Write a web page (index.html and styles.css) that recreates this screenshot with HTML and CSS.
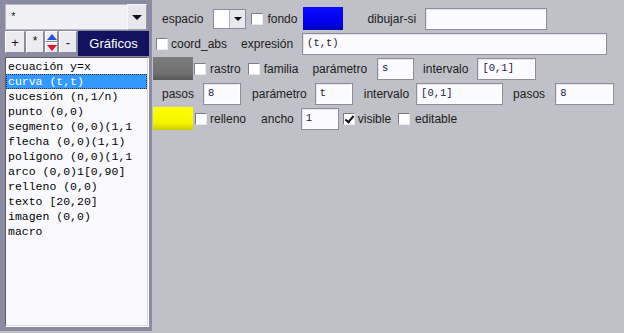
FILE: index.html
```html
<!DOCTYPE html>
<html lang="es">
<head>
    <meta charset="UTF-8">
    <title>Gráficos</title>
    <link rel="stylesheet" href="styles.css">
</head>
<body>
<div class="app">

    <!-- Left: element list -->
    <div class="side">
        <div class="combo">
            <span class="combo-text">*</span>
            <span class="combo-arrow"><span class="tri-down"></span></span>
        </div>
        <div class="tools">
            <span class="tbtn w-plus">+</span>
            <span class="tbtn w-star">*</span>
            <span class="spin">
                <span class="spin-up"><span class="tri-up"></span></span>
                <span class="spin-down"><span class="tri-red"></span></span>
            </span>
            <span class="tbtn w-minus">-</span>
            <span class="tab">Gráficos</span>
        </div>
        <ul class="list">
            <li>ecuación y=x</li>
            <li class="selected">curva (t,t)</li>
            <li>sucesión (n,1/n)</li>
            <li>punto (0,0)</li>
            <li>segmento (0,0)(1,1</li>
            <li>flecha (0,0)(1,1)</li>
            <li>polígono (0,0)(1,1</li>
            <li>arco (0,0)1[0,90]</li>
            <li>relleno (0,0)</li>
            <li>texto [20,20]</li>
            <li>imagen (0,0)</li>
            <li>macro</li>
        </ul>
    </div>

    <!-- Right: properties of the selected element -->
    <div class="props">
        <div class="row">
            <span class="ml-10">espacio</span>
            <span class="select ml-10"><span class="select-arrow"><span class="tri-small"></span></span></span>
            <span class="box ml-5"></span>
            <span class="ml-4">fondo</span>
            <span class="swatch swatch-blue ml-6"></span>
            <span class="ml-24">dibujar-si</span>
            <span class="field w-122 ml-9"></span>
        </div>
        <div class="row">
            <span class="box ml-4"></span>
            <span class="ml-3">coord_abs</span>
            <span class="ml-14">expresión</span>
            <span class="field w-305 ml-9">(t,t)</span>
        </div>
        <div class="row">
            <span class="swatch swatch-gray ml-1"></span>
            <span class="box ml-1"></span>
            <span class="ml-4">rastro</span>
            <span class="box ml-7"></span>
            <span class="ml-4">familia</span>
            <span class="ml-14">parámetro</span>
            <span class="field w-37 ml-10">s</span>
            <span class="ml-9">intervalo</span>
            <span class="field w-59 ml-9">[0,1]</span>
        </div>
        <div class="row">
            <span class="ml-10">pasos</span>
            <span class="field w-38 ml-9">8</span>
            <span class="ml-11">parámetro</span>
            <span class="field w-38 ml-8">t</span>
            <span class="ml-11">intervalo</span>
            <span class="field w-87 ml-7">[0,1]</span>
            <span class="ml-10">pasos</span>
            <span class="field w-59 ml-10">8</span>
        </div>
        <div class="row">
            <span class="swatch swatch-yellow ml-1"></span>
            <span class="box ml-2"></span>
            <span class="ml-3">relleno</span>
            <span class="ml-15">ancho</span>
            <span class="field w-38 ml-7">1</span>
            <span class="box checked ml-4"></span>
            <span class="ml-3">visible</span>
            <span class="box ml-7"></span>
            <span class="ml-5">editable</span>
        </div>
    </div>

</div>
</body>
</html>
```

FILE: styles.css
```css
body {
    margin: 0;
    font-family: "Liberation Sans", Arial, sans-serif;
    font-size: 12px;
    color: #1c1c1c;
    background-color: #c0c0c8;
    overflow: hidden;
}
.app {
    display: flex;
    height: 333px;
}

/* left side */
.side {
    width: 152px;
    height: 331px;
    flex-shrink: 0;
    background-color: #8a8aa2;
    padding: 4px 0 0 5px;
    box-sizing: border-box;
}
.combo {
    display: flex;
    width: 142px;
    height: 26px;
}
.combo-text {
    flex: 1;
    background-color: #f0f0f5;
    border: 1px solid #b8b8c4;
    border-right: none;
    font-family: "Liberation Mono", monospace;
    font-size: 11px;
    padding: 6px 0 0 4px;
    box-sizing: border-box;
}
.combo-arrow {
    width: 20px;
    background-color: #e6e6ec;
    border: 1px solid;
    border-color: #f8f8fc #9a9aa8 #9a9aa8 #f8f8fc;
    box-sizing: border-box;
    display: flex;
    justify-content: center;
    align-items: center;
}
.tri-down {
    width: 0;
    height: 0;
    border-left: 5px solid transparent;
    border-right: 5px solid transparent;
    border-top: 5px solid #111;
    margin-top: 1px;
}
.tools {
    display: flex;
    align-items: flex-start;
    margin-top: 1px;
    height: 25px;
}
.tbtn {
    height: 22px;
    box-sizing: border-box;
    background-color: #ebebf0;
    border: 1px solid;
    border-color: #ffffff #8a8a98 #8a8a98 #ffffff;
    display: flex;
    justify-content: center;
    align-items: center;
    font-size: 13px;
    color: #111;
    margin-right: 1px;
}
.w-plus { width: 20px; }
.w-star { width: 18px; font-family: "Liberation Mono", monospace; font-size: 12px; }
.w-minus { width: 18px; }
.spin {
    width: 13px;
    height: 22px;
    display: flex;
    flex-direction: column;
    margin-right: 1px;
}
.spin-up, .spin-down {
    flex: 1;
    background-color: #ebebf0;
    border: 1px solid;
    border-color: #ffffff #8a8a98 #8a8a98 #ffffff;
    display: flex;
    justify-content: center;
    align-items: center;
}
.tri-up {
    width: 0;
    height: 0;
    border-left: 5px solid transparent;
    border-right: 5px solid transparent;
    border-bottom: 6px solid #2a50d8;
}
.tri-red {
    width: 0;
    height: 0;
    border-left: 5px solid transparent;
    border-right: 5px solid transparent;
    border-top: 6px solid #e01428;
}
.tab {
    width: 71px;
    height: 25px;
    background-color: #12125e;
    color: #ffffff;
    font-size: 13px;
    display: flex;
    justify-content: center;
    align-items: center;
}
.list {
    list-style: none;
    margin: 1px 0 0 0;
    padding: 1px 0 0 0;
    width: 143px;
    height: 269px;
    box-sizing: border-box;
    background-color: #fafafe;
    border: 1px solid;
    border-color: #5c5c68 #d8d8e0 #d8d8e0 #5c5c68;
    box-shadow: 1px 1px 0 #ffffff;
    overflow: hidden;
    font-family: "Liberation Mono", monospace;
    font-size: 11.5px;
    color: #000;
}
.list li {
    height: 15px;
    line-height: 15px;
    padding-left: 2px;
    white-space: nowrap;
    overflow: hidden;
    box-sizing: border-box;
}
.list li.selected {
    background-color: #3399ff;
    color: #ffffff;
    outline: 1px dotted #403020;
    outline-offset: -1px;
}

/* right side */
.props {
    flex: 1;
    padding-top: 6px;
}
.row {
    display: flex;
    align-items: center;
    height: 25px;
    white-space: nowrap;
}
.field {
    height: 22px;
    box-sizing: border-box;
    background-color: #fbfbff;
    border: 1px solid #8c8c9a;
    box-shadow: inset -1px -1px 0 #ffffff, inset 1px 1px 0 #e4e4ec;
    font-family: "Liberation Mono", monospace;
    font-size: 10.5px;
    color: #202040;
    padding: 3px 0 0 4px;
}
.w-37 { width: 37px; }
.w-38 { width: 38px; }
.w-59 { width: 59px; }
.w-87 { width: 87px; }
.w-122 { width: 122px; }
.w-305 { width: 305px; }
.select {
    width: 33px;
    height: 20px;
    box-sizing: border-box;
    background-color: #ffffff;
    border: 1px solid #8c8c9a;
    display: flex;
    justify-content: flex-end;
}
.select-arrow {
    width: 15px;
    background-color: #e8e8ee;
    border-left: 1px solid #b0b0bc;
    display: flex;
    justify-content: center;
    align-items: center;
}
.tri-small {
    width: 0;
    height: 0;
    border-left: 4px solid transparent;
    border-right: 4px solid transparent;
    border-top: 4px solid #111;
}
.box {
    width: 12px;
    height: 12px;
    box-sizing: border-box;
    background-color: #ffffff;
    border: 1px solid;
    border-color: #7c7c88 #e8e8f0 #e8e8f0 #7c7c88;
    position: relative;
}
.box.checked::after {
    content: "";
    position: absolute;
    left: 3px;
    top: 0px;
    width: 3px;
    height: 7px;
    border: solid #111;
    border-width: 0 2px 2px 0;
    transform: rotate(40deg);
}
.swatch {
    width: 40px;
    height: 23px;
    box-sizing: border-box;
}
.swatch-blue { background: linear-gradient(#0a0aff, #0000e8 70%, #0000b8); }
.swatch-gray { background: linear-gradient(#7c7c7c, #707070 70%, #585858); }
.swatch-yellow { background: linear-gradient(#ffff00, #f4f400 70%, #cccc00); }

.ml-1 { margin-left: 1px; }
.ml-2 { margin-left: 2px; }
.ml-3 { margin-left: 3px; }
.ml-4 { margin-left: 4px; }
.ml-5 { margin-left: 5px; }
.ml-6 { margin-left: 6px; }
.ml-7 { margin-left: 7px; }
.ml-8 { margin-left: 8px; }
.ml-9 { margin-left: 9px; }
.ml-10 { margin-left: 10px; }
.ml-11 { margin-left: 11px; }
.ml-14 { margin-left: 14px; }
.ml-15 { margin-left: 15px; }
.ml-24 { margin-left: 24px; }
```
